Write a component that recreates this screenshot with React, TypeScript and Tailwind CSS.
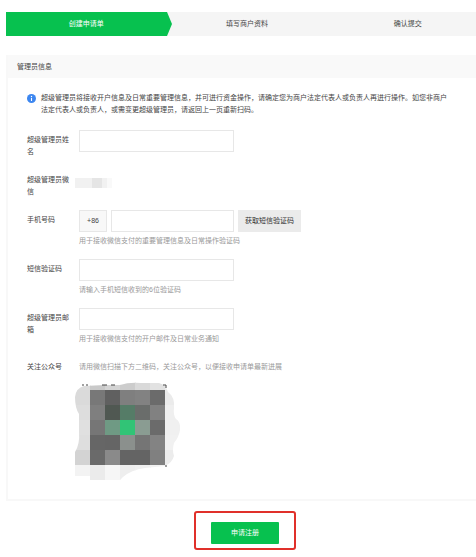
import type { ReactNode } from "react"

const inputClass = "block h-[22px] border border-[#e7e7e7] bg-white px-2 outline-none focus:border-[#07c160]"

const mosaicRows = [
  ["#dcdcdc", "#c9c9c9", "#d4d4d4", "#cccccc", "#d9d9d9", "#e2e2e2", "#eeeeee"],
  ["#dadada", "#787878", "#606060", "#7f7f7f", "#828282", "#6b6b6b", "#ebebeb"],
  ["#dddddd", "#7f7f7f", "#505852", "#557c67", "#6a6d6b", "#818181", "#efefef"],
  ["#e0e0e0", "#767676", "#6f9a84", "#31c476", "#8a9c92", "#6b6b6b", "#f0f0f0"],
  ["#dedede", "#666666", "#656565", "#8b908d", "#757575", "#838383", "#f1f1f1"],
  ["#d3d3d3", "#6a6a6a", "#8a8a8a", "#646464", "#646464", "#808080", "#ececec"],
  ["#f3f3f3", "#ebebeb", "#f6f6f6", "#eeeeee", "#f0f0f0", "#f2f2f2", "#f6f6f6"],
]

function InfoIcon() {
  return (
    <svg className="mt-[2px] size-[9px] shrink-0" viewBox="0 0 18 18" aria-hidden="true">
      <circle cx="9" cy="9" r="9" fill="#3d87f0" />
      <circle cx="9" cy="4.8" r="1.4" fill="#fff" />
      <path d="M9 7.6v6.4" fill="none" stroke="#fff" strokeWidth="2.2" />
    </svg>
  )
}

function QrMosaic() {
  return (
    <svg className="-ml-1 mt-[7px] block" width="106" height="100" viewBox="0 0 106 100" role="img" aria-label="公众号二维码">
      <defs>
        <clipPath id="smudge">
          <path d="M0 17 Q1 8 9 6 L30 5 L45 5 Q54 2 66 3 L84 3 Q91 5 93 12 Q100 17 99 28 Q98 35 101 39 Q106 42 105 50 Q104 57 99 63 Q97 70 99 76 Q97 83 90 86 L70 88 Q56 90 48 97 L45 100 L15 100 L15 96 L0 96 L0 72 Q5 64 4 52 L4 34 Q0 28 0 17Z" />
        </clipPath>
      </defs>
      <g clipPath="url(#smudge)" shapeRendering="crispEdges">
        {mosaicRows.map((row, y) =>
          row.map((fill, x) => (
            <rect key={`${x}-${y}`} x={x * 15} y={y * 15 - 5} width="16" height="15" fill={fill} />
          )),
        )}
      </g>
      <path d="M7 5h2M11 5h2M27 5h5M36 5h4M88 5h3v3M90 86h2" fill="none" stroke="#444" strokeWidth="1" />
    </svg>
  )
}

function Field({ label, htmlFor, children }: { label: string; htmlFor?: string; children: ReactNode }) {
  return (
    <div className="flex items-start gap-[7px]">
      {htmlFor ? (
        <label htmlFor={htmlFor} className="w-[45px] shrink-0 pt-1">
          {label}
        </label>
      ) : (
        <span className="w-[45px] shrink-0 pt-1">{label}</span>
      )}
      <div className="min-w-0 flex-1">{children}</div>
    </div>
  )
}

function Hint({ children }: { children: ReactNode }) {
  return <p className="mt-[3px] text-[#999]">{children}</p>
}

export default function App() {
  return (
    <main className="overflow-x-hidden bg-white pl-[6px] pt-3 pb-2 font-['Liberation_Sans','Noto_Sans_CJK_SC',sans-serif] text-[7px] leading-[12px] text-[#444]">
      <ol className="-mr-3 grid h-6 grid-cols-3 bg-[#f5f5f5] text-center leading-[23px]">
        <li className="relative bg-[#07c14f] text-white">
          创建申请单
          <svg className="absolute left-full top-0 h-full w-[5px]" viewBox="0 0 5 24" preserveAspectRatio="none" aria-hidden="true">
            <path d="M0 0L5 12L0 24Z" fill="#07c14f" />
          </svg>
        </li>
        <li>填写商户资料</li>
        <li>确认提交</li>
      </ol>

      <section className="mt-[19px] border-b-2 border-l-2 border-[#f8f8f8]">
        <h1 className="bg-[#f9f9f9] px-[9px] py-[5px] leading-[13px]">管理员信息</h1>

        <div className="px-[19px] pt-[14px] pb-[19px]">
          <div className="flex items-start gap-[5px]">
            <InfoIcon />
            <p className="whitespace-nowrap">
              超级管理员将接收开户信息及日常重要管理信息，并可进行资金操作，请确定您为商户法定代表人或负责人再进行操作。如您非商户
              <br />
              法定代表人或负责人，或需变更超级管理员，请返回上一页重新扫码。
            </p>
          </div>

          <form id="apply" className="mt-[14px] flex flex-col gap-3">
            <Field label="超级管理员姓名" htmlFor="name">
              <input id="name" type="text" className={`${inputClass} w-[155px]`} />
            </Field>

            <Field label="超级管理员微信">
              <div className="-ml-1 mt-2 flex h-[10px]" aria-hidden="true">
                <span className="w-[17px] bg-[#f1f1f1]" />
                <span className="w-[10px] bg-[#e5e5e5]" />
                <span className="w-[5px] bg-[#f1f1f1]" />
                <span className="w-[5px] bg-[#f9f9f9]" />
              </div>
            </Field>

            <Field label="手机号码" htmlFor="phone">
              <div className="flex gap-1">
                <span className="w-7 border border-[#e7e7e7] bg-[#f8f8f8] text-center leading-[20px]">+86</span>
                <input id="phone" type="tel" className={`${inputClass} w-[123px]`} />
                <button type="button" className="w-[63px] bg-[#ebebeb] text-[#333]">
                  获取短信验证码
                </button>
              </div>
              <Hint>用于接收微信支付的重要管理信息及日常操作验证码</Hint>
            </Field>

            <Field label="短信验证码" htmlFor="code">
              <input id="code" type="text" inputMode="numeric" className={`${inputClass} w-[155px]`} />
              <Hint>请输入手机短信收到的6位验证码</Hint>
            </Field>

            <Field label="超级管理员邮箱" htmlFor="email">
              <input id="email" type="email" className={`${inputClass} w-[155px]`} />
              <Hint>用于接收微信支付的开户邮件及日常业务通知</Hint>
            </Field>

            <Field label="关注公众号">
              <p className="pt-1 text-[#999]">请用微信扫描下方二维码，关注公众号，以便接收申请单最新进展</p>
              <QrMosaic />
            </Field>
          </form>
        </div>
      </section>

      <div className="mt-[10px] flex justify-center pl-2">
        <div className="rounded-[3px] border-2 border-[#e0302a] px-[15px] pt-[9px] pb-1">
          <button type="submit" form="apply" className="block h-[22px] w-[68px] rounded-[1px] bg-[#07c14f] text-white">
            申请注册
          </button>
        </div>
      </div>
    </main>
  )
}
